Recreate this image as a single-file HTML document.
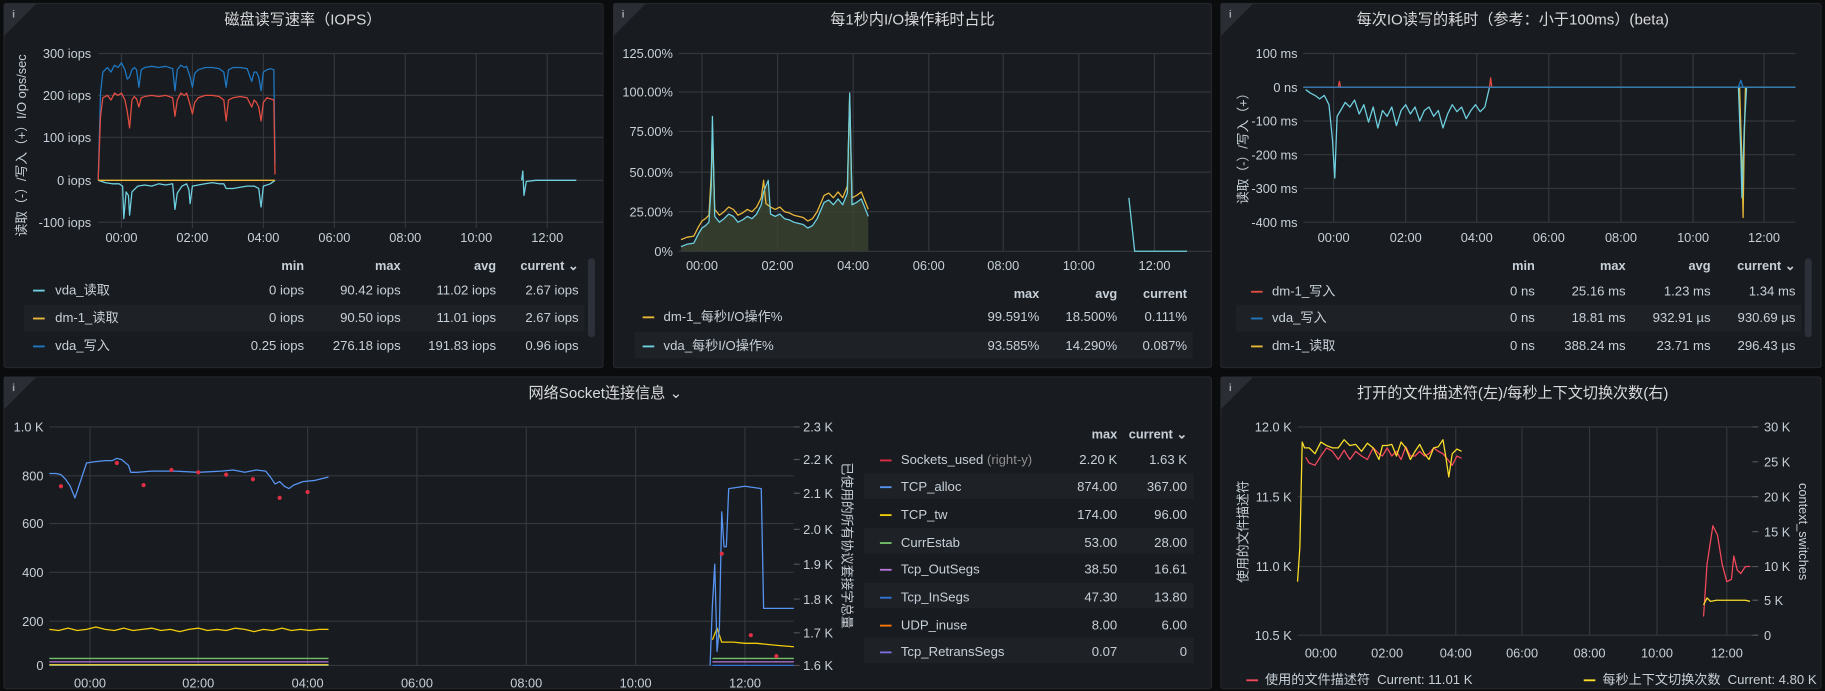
<!DOCTYPE html>
<html><head><meta charset="utf-8"><style>
html,body{margin:0;padding:0;background:#0b0c0e;overflow:hidden;width:1825px;height:691px}
svg{display:block}
text{font-family:"Liberation Sans","Noto Sans CJK SC",sans-serif;fill:#c7d0d9}
.t{font-size:13px;fill:#d8d9da;text-anchor:middle}
.k{font-size:11px;fill:#c7d0d9}
.r{text-anchor:end}
.m{text-anchor:middle}
.h{font-size:11px;fill:#33a2e5;font-weight:bold;text-anchor:end}
.l{font-size:11.3px;fill:#c7d0d9}
.g{stroke:#34373d;stroke-width:1;fill:none}
.d{fill:none;stroke-width:1.1;stroke-linejoin:round}
</style></head><body>
<svg width="1825" height="691" viewBox="0 0 1568 594" xmlns="http://www.w3.org/2000/svg">
<rect width="1568" height="594" fill="#0b0c0e"/>
<rect x="3" y="3" width="515" height="313" rx="2" fill="#181b1f" stroke="#23262b"/>
<rect x="527" y="3" width="514" height="313" rx="2" fill="#181b1f" stroke="#23262b"/>
<rect x="1049" y="3" width="516" height="313" rx="2" fill="#181b1f" stroke="#23262b"/>
<rect x="3" y="324" width="1038" height="268" rx="2" fill="#181b1f" stroke="#23262b"/>
<rect x="1049" y="324" width="516" height="268" rx="2" fill="#181b1f" stroke="#23262b"/>
<g fill="#2a2d33"><path d="M3,3h28l-28,28z"/><path d="M527,3h28l-28,28z"/><path d="M1049,3h28l-28,28z"/><path d="M3,324h28l-28,28z"/><path d="M1049,324h28l-28,28z"/></g>
<g font-size="9" fill="#9fa7b3"><text x="10" y="15" style="fill:#9fa7b3;font-weight:bold">i</text><text x="534" y="15" style="fill:#9fa7b3;font-weight:bold">i</text><text x="1056" y="15" style="fill:#9fa7b3;font-weight:bold">i</text><text x="10" y="336" style="fill:#9fa7b3;font-weight:bold">i</text><text x="1056" y="336" style="fill:#9fa7b3;font-weight:bold">i</text></g>

<text class="t" x="260" y="21">磁盘读写速率（IOPS）</text>
<g class="g"><path d="M84,46H518M84,82H518M84,118H518M84,155H518M84,191H518"/><path d="M104,46V196M165,46V196M226,46V196M287,46V196M348,46V196M409,46V196M470,46V196"/></g>
<g class="k r"><text x="78" y="50">300 iops</text><text x="78" y="86">200 iops</text><text x="78" y="122">100 iops</text><text x="78" y="159">0 iops</text><text x="78" y="195">-100 iops</text></g>
<text class="k m" transform="translate(22,125) rotate(-90)">读取（-）/写入（+）I/O ops/sec</text>
<g class="k m"><text x="104" y="208">00:00</text><text x="165" y="208">02:00</text><text x="226" y="208">04:00</text><text x="287" y="208">06:00</text><text x="348" y="208">08:00</text><text x="409" y="208">10:00</text><text x="470" y="208">12:00</text></g>
<path class="d" stroke="#1f78c1" d="M84,155 L86,80 L88,62 L92,58 L95,62 L98,56 L101,58 L104,54 L107,60 L109,68 L111,66 L113,60 L115,58 L117,60 L119,75 L121,60 L124,58 L130,57 L136,58 L142,57 L148,59 L150,78 L152,60 L155,56 L158,58 L160,57 L163,66 L165,75 L167,63 L170,60 L176,58 L182,58 L188,59 L192,62 L194,75 L196,60 L200,58 L206,58 L212,59 L216,70 L218,62 L220,62 L222,66 L224,78 L226,62 L229,60 L232,59 L235,60 L236,140"/>
<path class="d" stroke="#e24d42" d="M84,155 L86,100 L88,84 L92,82 L95,86 L98,80 L101,82 L104,80 L107,86 L109,96 L111,110 L113,86 L115,83 L117,85 L119,92 L121,84 L124,83 L130,82 L136,83 L142,82 L148,84 L150,100 L152,86 L155,80 L158,82 L160,80 L163,90 L165,98 L167,88 L170,84 L176,82 L182,82 L188,83 L192,86 L194,104 L196,86 L200,84 L206,83 L212,84 L216,92 L218,86 L220,88 L222,92 L224,104 L226,88 L229,84 L232,85 L235,86 L236,150"/>
<path class="d" stroke="#6ed0e0" d="M84,155 L90,157 L96,158 L102,158 L105,160 L106,188 L108,165 L110,168 L111,185 L113,165 L118,160 L124,159 L130,160 L136,158 L142,159 L148,158 L150,180 L152,166 L156,160 L160,158 L162,163 L163,175 L165,160 L170,159 L176,158 L182,157 L188,158 L192,158 L194,162 L200,162 L206,161 L212,160 L218,160 L222,162 L224,178 L226,160 L232,158 L236,155"/>
<path class="d" stroke="#eab839" d="M84,155 H236"/>
<path class="d" stroke="#6ed0e0" d="M448,155 L449,147 L450,168 L452,156 L460,155 L495,155"/>
<g class="h"><text x="261" y="232">min</text><text x="344" y="232">max</text><text x="426" y="232">avg</text><text x="497" y="232">current ⌄</text></g>
<rect x="20" y="262" width="482" height="23" fill="#1e2126"/>
<rect x="505" y="222" width="6" height="68" rx="3" fill="#2c3038"/>
<g class="l">
<rect x="28" y="249" width="10" height="1.6" fill="#6ed0e0"/><text x="47" y="253">vda_读取</text>
<text class="r" x="261" y="253">0 iops</text><text class="r" x="344" y="253">90.42 iops</text><text class="r" x="426" y="253">11.02 iops</text><text class="r" x="497" y="253">2.67 iops</text>
<rect x="28" y="273" width="10" height="1.6" fill="#eab839"/><text x="47" y="277">dm-1_读取</text>
<text class="r" x="261" y="277">0 iops</text><text class="r" x="344" y="277">90.50 iops</text><text class="r" x="426" y="277">11.01 iops</text><text class="r" x="497" y="277">2.67 iops</text>
<rect x="28" y="297" width="10" height="1.6" fill="#1f78c1"/><text x="47" y="301">vda_写入</text>
<text class="r" x="261" y="301">0.25 iops</text><text class="r" x="344" y="301">276.18 iops</text><text class="r" x="426" y="301">191.83 iops</text><text class="r" x="497" y="301">0.96 iops</text>
</g>

<text class="t" x="784" y="21">每1秒内I/O操作耗时占比</text>
<g class="g"><path d="M583,46H1041M583,79H1041M583,113H1041M583,148H1041M583,182H1041M583,216H1041"/><path d="M603,46V216M668,46V216M733,46V216M798,46V216M862,46V216M927,46V216M992,46V216"/></g>
<g class="k r"><text x="578" y="50">125.00%</text><text x="578" y="83">100.00%</text><text x="578" y="117">75.00%</text><text x="578" y="152">50.00%</text><text x="578" y="186">25.00%</text><text x="578" y="220">0%</text></g>
<g class="k m"><text x="603" y="232">00:00</text><text x="668" y="232">02:00</text><text x="733" y="232">04:00</text><text x="798" y="232">06:00</text><text x="862" y="232">08:00</text><text x="927" y="232">10:00</text><text x="992" y="232">12:00</text></g>
<path fill="#3b4530" opacity="0.8" d="M585,216 L585,212 590,210 596,209 600,201 603,196 606,194 609,191 611,160 612,100 614,186 618,191 622,188 626,184 630,186 634,191 638,189 642,186 646,188 650,184 654,176 656,165 660,155 662,184 666,186 670,184 674,188 678,189 682,191 686,192 690,193 694,196 698,194 702,188 705,181 708,174 712,172 716,176 720,171 724,176 728,166 730,80 732,176 736,174 740,171 744,181 746,186 L746,216 Z"/>
<path class="d" stroke="#eab839" d="M585,206 L590,204 596,203 600,195 603,190 606,188 609,185 611,150 612,110 614,180 618,185 622,182 626,178 630,180 634,185 638,183 642,180 646,182 650,178 654,170 656,155 658,175 662,178 666,180 670,178 674,182 678,183 682,185 686,186 690,187 694,190 698,188 702,182 705,175 708,168 712,166 716,170 720,165 724,170 728,160 730,82 732,170 736,168 740,165 744,175 746,180"/>
<path class="d" stroke="#6ed0e0" d="M585,212 L590,210 596,209 600,201 603,196 606,194 609,191 611,160 612,100 614,186 618,191 622,188 626,184 630,186 634,191 638,189 642,186 646,188 650,184 654,176 656,165 660,155 662,184 666,186 670,184 674,188 678,189 682,191 686,192 690,193 694,196 698,194 702,188 705,181 708,174 712,172 716,176 720,171 724,176 728,166 730,80 732,176 736,174 740,171 744,181 746,186"/>
<path class="d" stroke="#6ed0e0" d="M970,170 L975,216 L1020,216"/>
<g class="h"><text x="893" y="256">max</text><text x="960" y="256">avg</text><text x="1020" y="256">current</text></g>
<rect x="545" y="285" width="480" height="23" fill="#1e2126"/>
<g class="l">
<rect x="552" y="272" width="10" height="1.6" fill="#eab839"/><text x="570" y="276">dm-1_每秒I/O操作%</text>
<text class="r" x="893" y="276">99.591%</text><text class="r" x="960" y="276">18.500%</text><text class="r" x="1020" y="276">0.111%</text>
<rect x="552" y="297" width="10" height="1.6" fill="#6ed0e0"/><text x="570" y="301">vda_每秒I/O操作%</text>
<text class="r" x="893" y="301">93.585%</text><text class="r" x="960" y="301">14.290%</text><text class="r" x="1020" y="301">0.087%</text>
</g>

<text class="t" x="1300" y="21">每次IO读写的耗时（参考：小于100ms）(beta)</text>
<g class="g"><path d="M1120,46H1543M1120,75H1543M1120,104H1543M1120,133H1543M1120,162H1543M1120,191H1543"/><path d="M1146,46V191M1208,46V191M1269,46V191M1331,46V191M1393,46V191M1455,46V191M1516,46V191"/></g>
<g class="k r"><text x="1115" y="50">100 ms</text><text x="1115" y="79">0 ns</text><text x="1115" y="108">-100 ms</text><text x="1115" y="137">-200 ms</text><text x="1115" y="166">-300 ms</text><text x="1115" y="195">-400 ms</text></g>
<text class="k m" transform="translate(1072,125) rotate(-90)">读取（-）/写入（+）</text>
<g class="k m"><text x="1146" y="208">00:00</text><text x="1208" y="208">02:00</text><text x="1269" y="208">04:00</text><text x="1331" y="208">06:00</text><text x="1393" y="208">08:00</text><text x="1455" y="208">10:00</text><text x="1516" y="208">12:00</text></g>
<path class="d" stroke="#6ed0e0" d="M1122,77 L1126,80 1130,82 1134,85 1138,82 1142,90 1145,120 1147,153 1149,100 1152,95 1156,88 1160,92 1164,86 1168,98 1172,90 1176,105 1180,92 1184,110 1188,95 1192,100 1196,92 1200,108 1204,95 1208,90 1212,98 1216,92 1220,104 1224,95 1228,92 1232,100 1236,95 1240,110 1244,98 1248,90 1252,96 1256,92 1260,102 1264,95 1268,90 1272,96 1276,92 1280,75"/>
<path class="d" stroke="#eab839" d="M1120,75 H1543 M1495,75 L1497,140 1498,187 1499,120 1500,75"/>
<path class="d" stroke="#6ed0e0" d="M1494,75 L1496,130 1497,170 1499,110 1501,75"/>
<path class="d" stroke="#e24d42" d="M1120,75 H1280 L1281,67 1282,75 M1150,75 L1151,70 1152,75"/>
<path class="d" stroke="#1f78c1" d="M1120,75 H1543 M1494,75 L1496,69 1498,75"/>
<g class="h"><text x="1319" y="232">min</text><text x="1397" y="232">max</text><text x="1470" y="232">avg</text><text x="1543" y="232">current ⌄</text></g>
<rect x="1062" y="262" width="486" height="23" fill="#1e2126"/>
<rect x="1551" y="222" width="6" height="68" rx="3" fill="#2c3038"/>
<g class="l">
<rect x="1075" y="250" width="10" height="1.6" fill="#e24d42"/><text x="1093" y="254">dm-1_写入</text>
<text class="r" x="1319" y="254">0 ns</text><text class="r" x="1397" y="254">25.16 ms</text><text class="r" x="1470" y="254">1.23 ms</text><text class="r" x="1543" y="254">1.34 ms</text>
<rect x="1075" y="273" width="10" height="1.6" fill="#1f78c1"/><text x="1093" y="277">vda_写入</text>
<text class="r" x="1319" y="277">0 ns</text><text class="r" x="1397" y="277">18.81 ms</text><text class="r" x="1470" y="277">932.91 µs</text><text class="r" x="1543" y="277">930.69 µs</text>
<rect x="1075" y="297" width="10" height="1.6" fill="#eab839"/><text x="1093" y="301">dm-1_读取</text>
<text class="r" x="1319" y="301">0 ns</text><text class="r" x="1397" y="301">388.24 ms</text><text class="r" x="1470" y="301">23.71 ms</text><text class="r" x="1543" y="301">296.43 µs</text>
</g>

<text class="t" x="520" y="342">网络Socket连接信息 ⌄</text>
<g class="g"><path d="M42,367H682M42,409H682M42,450H682M42,492H682M42,534H682M42,572H682"/><path d="M77,367V572M170,367V572M264,367V572M358,367V572M452,367V572M546,367V572M640,367V572"/></g>
<g stroke="#555" stroke-width="1"><path d="M682,367h5M682,395h5M682,424h5M682,455h5M682,485h5M682,515h5M682,544h5M682,572h5"/></g>
<g class="k r"><text x="37" y="371">1.0 K</text><text x="37" y="413">800</text><text x="37" y="454">600</text><text x="37" y="496">400</text><text x="37" y="538">200</text><text x="37" y="576">0</text></g>
<g class="k"><text x="690" y="371">2.3 K</text><text x="690" y="399">2.2 K</text><text x="690" y="428">2.1 K</text><text x="690" y="459">2.0 K</text><text x="690" y="489">1.9 K</text><text x="690" y="519">1.8 K</text><text x="690" y="548">1.7 K</text><text x="690" y="576">1.6 K</text></g>
<text class="k m" transform="translate(724,469) rotate(90)">已使用的所有协议套接字总量</text>
<g class="k m"><text x="77" y="591">00:00</text><text x="170" y="591">02:00</text><text x="264" y="591">04:00</text><text x="358" y="591">06:00</text><text x="452" y="591">08:00</text><text x="546" y="591">10:00</text><text x="640" y="591">12:00</text></g>
<path class="d" stroke="#3274d9" d="M42,572 H282 M612,572 H682"/>
<path class="d" stroke="#fade2a" d="M42,571.5 H282"/>
<path class="d" stroke="#b877d9" d="M42,569 H282 M612,569 H682"/>
<path class="d" stroke="#73bf69" d="M42,566 H282 M612,566 H682"/>
<path class="d" stroke="#f2cc0c" d="M42,541 L50,542 58,540 66,542 74,541 82,539 90,541 98,542 106,540 114,542 122,541 130,540 138,542 146,541 154,543 162,541 170,540 178,542 186,541 194,542 202,540 210,541 218,543 226,541 234,542 242,540 250,542 258,541 266,542 274,541 282,541 M612,550 L616,540 620,552 630,552 640,553 650,553 660,554 670,555 682,556"/>
<path class="d" stroke="#5794f2" d="M42,407 L48,407 52,408 56,412 60,418 64,428 66,422 70,410 74,398 80,397 90,396 96,396 100,394 104,395 110,400 112,406 118,406 130,405 150,405 170,406 190,405 200,404 210,406 220,404 228,405 232,410 236,416 240,414 244,418 248,420 252,417 260,414 270,413 282,410 M610,572 L612,520 614,485 616,560 618,540 620,440 622,470 624,470 626,420 640,418 654,420 656,523 682,523"/>
<g fill="#e02f44"><circle cx="52" cy="418" r="1.8"/><circle cx="100" cy="398" r="1.8"/><circle cx="123" cy="417" r="1.8"/><circle cx="147" cy="404" r="1.8"/><circle cx="170" cy="406" r="1.8"/><circle cx="194" cy="408" r="1.8"/><circle cx="217" cy="412" r="1.8"/><circle cx="240" cy="428" r="1.8"/><circle cx="264" cy="423" r="1.8"/><circle cx="620" cy="476" r="1.8"/><circle cx="645" cy="546" r="1.8"/><circle cx="667" cy="564" r="1.8"/></g>
<g class="h"><text x="960" y="377">max</text><text x="1020" y="377">current ⌄</text></g>
<g fill="#1e2126"><rect x="742" y="407" width="284" height="22"/><rect x="742" y="454" width="284" height="22"/><rect x="742" y="501" width="284" height="22"/><rect x="742" y="548" width="284" height="22"/></g>
<g class="l">
<rect x="756" y="395" width="10" height="1.6" fill="#e02f44"/><text x="774" y="399">Sockets_used <tspan style="fill:#8e8e8e">(right-y)</tspan></text><text class="r" x="960" y="399">2.20 K</text><text class="r" x="1020" y="399">1.63 K</text>
<rect x="756" y="418" width="10" height="1.6" fill="#5794f2"/><text x="774" y="422">TCP_alloc</text><text class="r" x="960" y="422">874.00</text><text class="r" x="1020" y="422">367.00</text>
<rect x="756" y="442" width="10" height="1.6" fill="#f2cc0c"/><text x="774" y="446">TCP_tw</text><text class="r" x="960" y="446">174.00</text><text class="r" x="1020" y="446">96.00</text>
<rect x="756" y="466" width="10" height="1.6" fill="#73bf69"/><text x="774" y="470">CurrEstab</text><text class="r" x="960" y="470">53.00</text><text class="r" x="1020" y="470">28.00</text>
<rect x="756" y="489" width="10" height="1.6" fill="#b877d9"/><text x="774" y="493">Tcp_OutSegs</text><text class="r" x="960" y="493">38.50</text><text class="r" x="1020" y="493">16.61</text>
<rect x="756" y="513" width="10" height="1.6" fill="#3274d9"/><text x="774" y="517">Tcp_InSegs</text><text class="r" x="960" y="517">47.30</text><text class="r" x="1020" y="517">13.80</text>
<rect x="756" y="537" width="10" height="1.6" fill="#ff780a"/><text x="774" y="541">UDP_inuse</text><text class="r" x="960" y="541">8.00</text><text class="r" x="1020" y="541">6.00</text>
<rect x="756" y="560" width="10" height="1.6" fill="#7a6ee0"/><text x="774" y="564">Tcp_RetransSegs</text><text class="r" x="960" y="564">0.07</text><text class="r" x="1020" y="564">0</text>
</g>

<text class="t" x="1300" y="342">打开的文件描述符(左)/每秒上下文切换次数(右)</text>
<g class="g"><path d="M1115,367H1511M1115,427H1511M1115,487H1511M1115,546H1511"/><path d="M1135,367V546M1192,367V546M1251,367V546M1308,367V546M1366,367V546M1424,367V546M1484,367V546"/></g>
<g stroke="#555"><path d="M1506,367h5M1506,397h5M1506,427h5M1506,457h5M1506,487h5M1506,516h5M1506,546h5"/></g>
<g class="k r"><text x="1110" y="371">12.0 K</text><text x="1110" y="431">11.5 K</text><text x="1110" y="491">11.0 K</text><text x="1110" y="550">10.5 K</text></g>
<g class="k"><text x="1516" y="371">30 K</text><text x="1516" y="401">25 K</text><text x="1516" y="431">20 K</text><text x="1516" y="461">15 K</text><text x="1516" y="491">10 K</text><text x="1516" y="520">5 K</text><text x="1516" y="550">0</text></g>
<text class="k m" transform="translate(1072,457) rotate(-90)">使用的文件描述符</text>
<text class="k m" transform="translate(1546,457) rotate(90)">context_switches</text>
<g class="k m"><text x="1135" y="565">00:00</text><text x="1192" y="565">02:00</text><text x="1251" y="565">04:00</text><text x="1308" y="565">06:00</text><text x="1366" y="565">08:00</text><text x="1424" y="565">10:00</text><text x="1484" y="565">12:00</text></g>
<path class="d" stroke="#f2495c" stroke-width="1.5" d="M1122,393 L1125,398 1130,400 1135,392 1140,385 1145,388 1150,395 1155,387 1160,395 1165,388 1170,392 1175,395 1180,385 1185,390 1188,392 1192,385 1196,392 1200,388 1204,395 1208,384 1212,392 1216,392 1220,388 1224,392 1228,390 1232,385 1236,388 1240,390 1244,395 1248,400 1252,392 1256,394 M1464,530 L1467,485 1472,452 1476,460 1480,485 1484,500 1488,498 1490,478 1493,490 1496,493 1500,487 1504,487"/>
<path class="d" stroke="#fade2a" stroke-width="1.5" d="M1115,500 L1117,470 1119,380 1121,385 1125,385 1130,390 1135,380 1140,383 1145,385 1150,385 1155,378 1160,383 1165,382 1170,388 1175,381 1180,385 1185,395 1188,383 1192,383 1196,382 1200,392 1204,380 1208,385 1212,395 1216,388 1220,382 1224,390 1228,395 1232,385 1236,384 1240,378 1242,390 1245,410 1248,390 1252,386 1256,388 M1464,520 L1467,514 1470,517 1475,516 1490,516 1500,516 1504,517"/>
<g class="l">
<rect x="1071" y="584" width="10" height="1.6" fill="#f2495c"/><text x="1087" y="588">使用的文件描述符 <tspan dx="3">Current: 11.01 K</tspan></text>
<rect x="1361" y="584" width="10" height="1.6" fill="#fade2a"/><text x="1377" y="588">每秒上下文切换次数 <tspan dx="3">Current: 4.80 K</tspan></text>
</g>
</svg>
</body></html>
